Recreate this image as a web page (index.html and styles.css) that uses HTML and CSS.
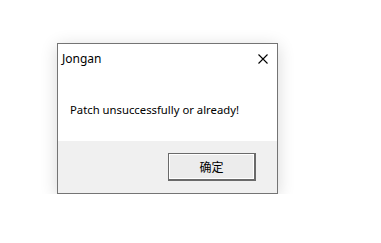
FILE: index.html
```html
<!DOCTYPE html>
<html>
<head>
<meta charset="utf-8">
<link rel="stylesheet" href="styles.css">
</head>
<body>
<div class="dialog">
  <div class="titlebar">
    <span class="title">Jongan</span>
    <svg class="close" width="10" height="10" viewBox="0 0 10 10">
      <path d="M0.5 0.5 L9.5 9.5 M9.5 0.5 L0.5 9.5" stroke="#000" stroke-width="1.1" fill="none"/>
    </svg>
  </div>
  <div class="content">
    <p class="message">Patch unsuccessfully or already!</p>
  </div>
  <div class="footer">
    <button class="btn">确定</button>
  </div>
</div>
</body>
</html>
```
FILE: styles.css
```css
html, body {
  margin: 0;
  padding: 0;
  background: #fff;
}
body {
  padding: 43px 0 0 57px;
  font-family: "Noto Sans", "Noto Sans CJK SC", sans-serif;
  font-size: 12px;
  color: #000;
}
.dialog {
  width: 219px;
  height: 149px;
  border: 1px solid #747474;
  background: #fff;
  display: flex;
  flex-direction: column;
  box-shadow: 0 3px 16px rgba(0,0,0,0.16);
}
.titlebar {
  height: 29px;
  display: flex;
  align-items: center;
  justify-content: space-between;
  padding: 0 9px 0 4px;
}
.title {
  font-size: 12px;
  line-height: 16px;
}
.close {
  display: block;
}
.content {
  height: 68px;
  display: flex;
  align-items: center;
  padding-left: 12px;
}
.message {
  margin: 0;
  margin-top: 6px;
  font-size: 11.3px;
  line-height: 16px;
}
.footer {
  flex: 1;
  background: #f0f0f0;
  display: flex;
  justify-content: flex-end;
  align-items: flex-start;
  padding: 12px 21px 0 0;
}
.btn {
  width: 88px;
  height: 28px;
  box-sizing: border-box;
  border: 1px solid #6a6a6a;
  border-right-width: 2px;
  border-bottom-width: 2px;
  background: #ececec;
  box-shadow: inset 1px 1px 0 #fff, inset -1px -1px 0 #fff;
  font-family: "Noto Sans CJK SC", sans-serif;
  font-size: 12px;
  color: #000;
  padding: 0;
  margin: 0;
}
```
